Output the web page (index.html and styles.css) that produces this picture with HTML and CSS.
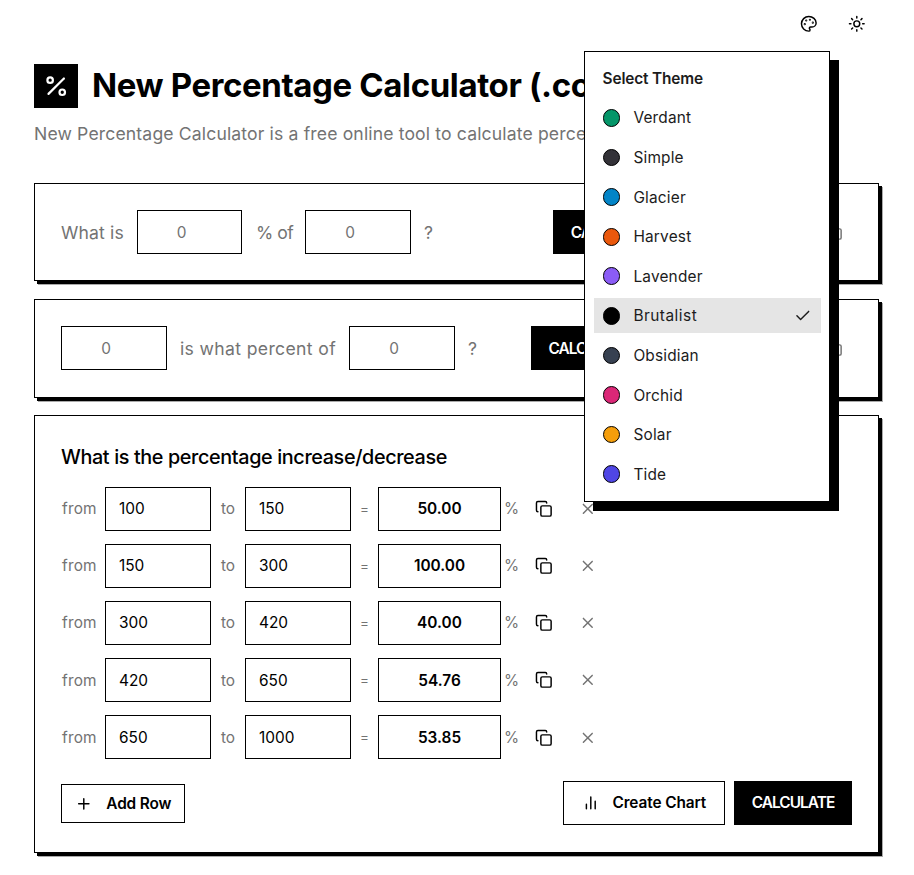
FILE: index.html
```html
<!DOCTYPE html>
<html lang="en">
<head>
  <meta charset="UTF-8" />
  <meta name="viewport" content="width=device-width, initial-scale=1.0" />
  <title>New Percentage Calculator (.com)</title>
  <link rel="stylesheet" href="styles.css">
</head>
<body>
  <svg class="sprite">
    <symbol id="copy" viewBox="0 0 24 24"><rect width="14" height="14" x="8" y="8" rx="2" /><path d="M4 16c-1.1 0-2-.9-2-2V4c0-1.1.9-2 2-2h10c1.1 0 2 .9 2 2" /></symbol>
    <symbol id="close" viewBox="0 0 24 24"><path d="M18 6 6 18M6 6l12 12" /></symbol>
  </svg>

  <div class="topbar">
    <button class="icon-btn" aria-label="Theme">
      <svg class="icon" viewBox="0 0 24 24"><circle cx="13.5" cy="6.5" r=".5" /><circle cx="17.5" cy="10.5" r=".5" /><circle cx="8.5" cy="7.5" r=".5" /><circle cx="6.5" cy="12.5" r=".5" /><path d="M12 2C6.5 2 2 6.5 2 12s4.5 10 10 10c.926 0 1.648-.746 1.648-1.688 0-.437-.18-.835-.437-1.125-.29-.289-.438-.652-.438-1.125a1.64 1.64 0 0 1 1.668-1.668h1.996c3.051 0 5.555-2.503 5.555-5.554C21.965 6.012 17.461 2 12 2z" /></svg>
    </button>
    <button class="icon-btn" aria-label="Dark mode">
      <svg class="icon" viewBox="0 0 24 24"><circle cx="12" cy="12" r="4" /><path d="M12 2v2M12 20v2M4.93 4.93l1.41 1.41M17.66 17.66l1.41 1.41M2 12h2M20 12h2M6.34 17.66l-1.41 1.41M19.07 4.93l-1.41 1.41" /></svg>
    </button>

    <div class="menu">
      <div class="menu-title">Select Theme</div>
      <div class="menu-item"><span class="dot verdant"></span>Verdant</div>
      <div class="menu-item"><span class="dot simple"></span>Simple</div>
      <div class="menu-item"><span class="dot glacier"></span>Glacier</div>
      <div class="menu-item"><span class="dot harvest"></span>Harvest</div>
      <div class="menu-item"><span class="dot lavender"></span>Lavender</div>
      <div class="menu-item active"><span class="dot brutalist"></span>Brutalist
        <svg class="icon check" viewBox="0 0 24 24"><path d="M20 6 9 17l-5-5" /></svg>
      </div>
      <div class="menu-item"><span class="dot obsidian"></span>Obsidian</div>
      <div class="menu-item"><span class="dot orchid"></span>Orchid</div>
      <div class="menu-item"><span class="dot solar"></span>Solar</div>
      <div class="menu-item"><span class="dot tide"></span>Tide</div>
    </div>
  </div>

  <main>
    <header>
      <div class="brand">
        <div class="logo">
          <svg class="icon" viewBox="0 0 24 24"><path d="M19 5 5 19" /><circle cx="6.5" cy="6.5" r="2.5" /><circle cx="17.5" cy="17.5" r="2.5" /></svg>
        </div>
        <h1>New Percentage Calculator (.com)</h1>
      </div>
      <p class="tagline">New Percentage Calculator is a free online tool to calculate percentages.</p>
    </header>

    <section class="card first">
      <div class="question">
        <span class="w-what">What is</span>
        <input class="field" placeholder="0">
        <span class="w-of">% of</span>
        <input class="field" placeholder="0">
        <span>?</span>
      </div>
      <div class="answer">
        <button class="btn primary">CALCULATE</button>
        <div class="field result"></div>
        <button class="icon-btn muted" aria-label="Copy"><svg class="icon"><use href="#copy" /></svg></button>
      </div>
    </section>

    <section class="card second">
      <div class="question">
        <input class="field" placeholder="0">
        <span class="w-percent">is what percent of</span>
        <input class="field" placeholder="0">
        <span>?</span>
      </div>
      <div class="answer">
        <button class="btn primary">CALCULATE</button>
        <div class="field result"></div>
        <span>%</span>
        <button class="icon-btn muted" aria-label="Copy"><svg class="icon"><use href="#copy" /></svg></button>
      </div>
    </section>

    <section class="card change">
      <h2>What is the percentage increase/decrease</h2>
      <div class="rows">
        <div class="row">
          <span class="from">from</span><input class="field" value="100"><span class="to">to</span><input class="field" value="150"><span class="eq">=</span>
          <div class="field result">50.00</div><span class="pct">%</span>
          <button class="icon-btn" aria-label="Copy"><svg class="icon"><use href="#copy" /></svg></button>
          <button class="icon-btn muted" aria-label="Remove"><svg class="icon"><use href="#close" /></svg></button>
        </div>
        <div class="row">
          <span class="from">from</span><input class="field" value="150"><span class="to">to</span><input class="field" value="300"><span class="eq">=</span>
          <div class="field result">100.00</div><span class="pct">%</span>
          <button class="icon-btn" aria-label="Copy"><svg class="icon"><use href="#copy" /></svg></button>
          <button class="icon-btn muted" aria-label="Remove"><svg class="icon"><use href="#close" /></svg></button>
        </div>
        <div class="row">
          <span class="from">from</span><input class="field" value="300"><span class="to">to</span><input class="field" value="420"><span class="eq">=</span>
          <div class="field result">40.00</div><span class="pct">%</span>
          <button class="icon-btn" aria-label="Copy"><svg class="icon"><use href="#copy" /></svg></button>
          <button class="icon-btn muted" aria-label="Remove"><svg class="icon"><use href="#close" /></svg></button>
        </div>
        <div class="row">
          <span class="from">from</span><input class="field" value="420"><span class="to">to</span><input class="field" value="650"><span class="eq">=</span>
          <div class="field result">54.76</div><span class="pct">%</span>
          <button class="icon-btn" aria-label="Copy"><svg class="icon"><use href="#copy" /></svg></button>
          <button class="icon-btn muted" aria-label="Remove"><svg class="icon"><use href="#close" /></svg></button>
        </div>
        <div class="row">
          <span class="from">from</span><input class="field" value="650"><span class="to">to</span><input class="field" value="1000"><span class="eq">=</span>
          <div class="field result">53.85</div><span class="pct">%</span>
          <button class="icon-btn" aria-label="Copy"><svg class="icon"><use href="#copy" /></svg></button>
          <button class="icon-btn muted" aria-label="Remove"><svg class="icon"><use href="#close" /></svg></button>
        </div>
      </div>
      <div class="actions">
        <button class="btn add"><svg class="icon" viewBox="0 0 24 24"><path d="M5 12h14M12 5v14" /></svg>Add Row</button>
        <button class="btn chart"><svg class="icon" viewBox="0 0 24 24"><path d="M18 20V10M12 20V4M6 20v-6" /></svg>Create Chart</button>
        <button class="btn primary">CALCULATE</button>
      </div>
    </section>
  </main>
</body>
</html>
```
FILE: styles.css
```css
* {
  box-sizing: border-box;
}
body {
  margin: 0;
  height: 875px;
  overflow: hidden;
  background: #fff;
  color: #000;
  font-family: Inter, "Liberation Sans", sans-serif;
  font-size: 17.6px;
}
button, input {
  font: inherit;
  color: inherit;
}
.sprite {
  display: none;
}
.icon {
  width: 17.6px;
  height: 17.6px;
  flex: none;
  fill: none;
  stroke: currentColor;
  stroke-width: 2;
  stroke-linecap: round;
  stroke-linejoin: round;
}
.icon-btn {
  display: flex;
  align-items: center;
  justify-content: center;
  padding: 0;
  border: 0;
  background: none;
}
.muted {
  color: #737373;
}

/* top bar and theme menu */
.topbar {
  position: relative;
  display: flex;
  justify-content: flex-end;
  gap: 9px;
  height: 48px;
  padding-right: 38px;
}
.topbar .icon-btn {
  width: 39px;
}
.menu {
  position: absolute;
  z-index: 10;
  top: 51px;
  left: 584px;
  width: 246px;
  display: flex;
  flex-direction: column;
  gap: 4.4px;
  padding: 8.8px 8px 8.8px 8.8px;
  background: #fff;
  border: 1px solid #000;
  box-shadow: 9px 9px 0 #000;
  color: #1c1c1c;
  font-size: 15.4px;
}
.menu-title, .menu-item {
  display: flex;
  align-items: center;
  height: 35.2px;
  padding: 0 9.4px 0 8.8px;
}
.menu-title {
  font-weight: 600;
  letter-spacing: -0.15px;
}
.menu-item {
  gap: 13.2px;
  letter-spacing: 0.2px;
}
.menu-item.active {
  background: #e5e5e5;
  letter-spacing: 0.5px;
}
.check {
  margin-left: auto;
}
.dot {
  width: 17.6px;
  height: 17.6px;
  border: 1px solid #000;
  border-radius: 50%;
}
.verdant { background: #059669; }
.simple { background: #333238; }
.glacier { background: #0284c7; }
.harvest { background: #ea580c; }
.lavender { background: #8b5cf6; }
.brutalist { background: #000; }
.obsidian { background: #374151; }
.orchid { background: #db2777; }
.solar { background: #f59e0b; }
.tide { background: #4f46e5; }

/* page */
main {
  width: 845px;
  margin-left: 34px;
  padding-top: 16px;
}
.brand {
  display: flex;
  align-items: center;
  gap: 14px;
}
.logo {
  display: flex;
  align-items: center;
  justify-content: center;
  width: 44px;
  height: 44px;
  background: #000;
  color: #fff;
}
.logo .icon {
  width: 26.4px;
  height: 26.4px;
}
h1 {
  margin: 0 0 2px;
  font-size: 33px;
  line-height: 40px;
  font-weight: 700;
  letter-spacing: -0.38px;
  white-space: nowrap;
}
.tagline {
  margin: 13px 0 36px;
  line-height: 26px;
  letter-spacing: 0.14px;
  color: #737373;
  white-space: nowrap;
}
.card {
  display: flex;
  justify-content: space-between;
  margin-bottom: 18px;
  padding: 26px;
  background: #fff;
  border: 1px solid #000;
  box-shadow: 3px 3px 0 #000, 4px 4px 0 #aaa;
}
.card.second {
  padding-bottom: 27px;
  margin-bottom: 17px;
}
.question, .answer {
  display: flex;
  align-items: center;
  color: #737373;
}
.question {
  gap: 13px;
  white-space: nowrap;
}
.first .question .field:first-of-type {
  width: 105px;
}
.answer {
  gap: 9px;
}
.first .answer {
  gap: 11px;
}
.answer .icon-btn {
  width: 35px;
  margin-right: 1px;
}
.w-what {
  width: 63px;
  letter-spacing: 0.15px;
}
.w-of {
  width: 37px;
  margin-left: 1px;
  margin-right: -1px;
  letter-spacing: -0.5px;
}
.w-percent {
  width: 156px;
  letter-spacing: 0.35px;
}
.field {
  width: 106px;
  height: 44px;
  padding: 0 13px;
  border: 1px solid #000;
  border-radius: 0;
  background: #fff;
  font-size: 15.4px;
}
.question .field {
  padding-right: 29px;
  text-align: center;
}
.field::placeholder {
  color: #737373;
  opacity: 1;
}
.result {
  display: flex;
  align-items: center;
  justify-content: center;
  width: 123px;
  color: #000;
  font-weight: 600;
}

/* increase / decrease */
.change {
  display: block;
  margin-bottom: 0;
  padding-bottom: 27px;
}
h2 {
  margin: 0 0 13.2px;
  font-size: 19.8px;
  line-height: 31.4px;
  font-weight: 500;
  letter-spacing: -0.37px;
}
.rows {
  display: grid;
  gap: 13.2px;
}
.row {
  display: grid;
  grid-template-columns: 44px 106px 34px 106px 27px 123px 21px 44px 44px;
  align-items: center;
  color: #737373;
  font-size: 15.4px;
}
.row .field {
  color: #000;
}
.row .icon-btn:not(.muted) {
  color: #000;
}
.from {
  padding-left: 1px;
  letter-spacing: 0.2px;
}
.to, .eq, .pct {
  text-align: center;
}
.eq {
  font-size: 13.5px;
}
.actions {
  display: flex;
  align-items: center;
  gap: 9px;
  margin-top: 21.6px;
}
.btn {
  display: flex;
  align-items: center;
  justify-content: center;
  height: 44px;
  padding: 0;
  border: 1px solid #000;
  background: #fff;
  font-size: 15.4px;
  font-weight: 600;
  white-space: nowrap;
}
.primary {
  width: 118px;
  background: #000;
  color: #fff;
  letter-spacing: -0.95px;
}
.add {
  width: 124px;
  height: 39px;
  gap: 14px;
  margin-top: 1px;
  margin-right: auto;
  letter-spacing: -0.15px;
}
.chart {
  width: 162px;
  gap: 13px;
  letter-spacing: -0.1px;
}
```
